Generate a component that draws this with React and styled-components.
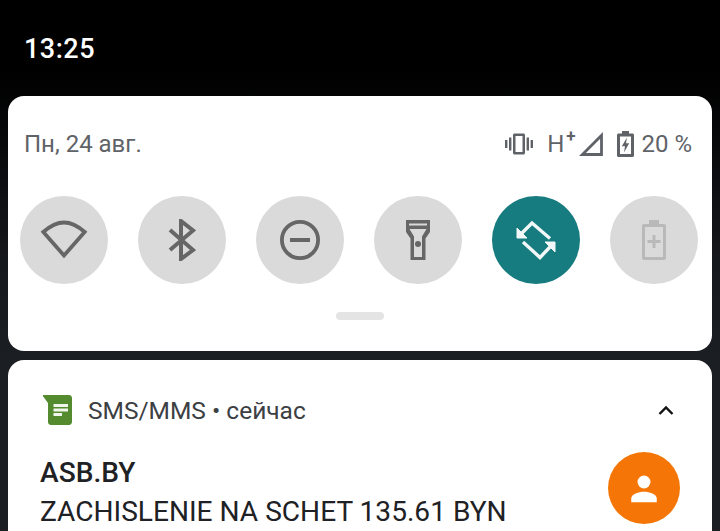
import React from 'react';
import styled, { createGlobalStyle } from 'styled-components';

const GlobalStyle = createGlobalStyle`
  html, body {
    margin: 0;
    padding: 0;
    height: 100%;
    background: #000;
    overflow: hidden;
  }
  #root {
    height: 100%;
  }
`;

const Screen = styled.div`
  width: 720px;
  height: 531px;
  overflow: hidden;
  background: linear-gradient(#000 70px, #15181c 260px, #1b1e22 360px);
  font-family: Roboto, 'Liberation Sans', sans-serif;
  padding: 0 8px;
  box-sizing: border-box;
`;

const StatusBar = styled.div`
  height: 96px;
  display: flex;
  align-items: center;
  padding: 1px 0 0 16px;
  box-sizing: border-box;
  color: #fff;
  font-size: 27px;
  font-weight: 500;
  letter-spacing: 0.5px;
`;

const QuickPanel = styled.section`
  height: 255px;
  background: #fff;
  border-radius: 16px;
  padding: 0 14px 0 12px;
  box-sizing: border-box;
  display: flex;
  flex-direction: column;
`;

const PanelHeader = styled.div`
  height: 100px;
  padding: 0 6px 4px 4px;
  box-sizing: border-box;
  display: flex;
  align-items: center;
  justify-content: space-between;
  color: #5f6368;
  font-size: 24px;
`;

const StatusIcons = styled.div`
  display: flex;
  align-items: center;
`;

const NetworkLabel = styled.span`
  margin-left: 14px;
  position: relative;
  padding-right: 9px;
`;

const Plus = styled.span`
  position: absolute;
  right: -2px;
  top: -4px;
  font-size: 17px;
  font-weight: 700;
`;

const Percent = styled.span`
  margin-left: 7px;
`;

const Toggles = styled.div`
  display: flex;
  gap: 30px;
`;

const Toggle = styled.div`
  width: 88px;
  height: 88px;
  border-radius: 50%;
  background: ${(p) => (p.$active ? '#167c80' : '#dadada')};
  display: flex;
  align-items: center;
  justify-content: center;
`;

const Handle = styled.div`
  width: 48px;
  height: 8px;
  border-radius: 4px;
  background: #e4e4e4;
  margin: 28px auto 0 auto;
  position: relative;
  left: 1px;
`;

const NotificationCard = styled.section`
  margin-top: 9px;
  height: 220px;
  background: #fff;
  border-radius: 16px 16px 0 0;
  padding: 31px 32px 0 32px;
  box-sizing: border-box;
`;

const AppRow = styled.div`
  height: 38px;
  display: flex;
  align-items: center;
  color: #3c4043;
  font-size: 24.5px;
`;

const AppName = styled.span`
  margin-left: 15px;
`;

const Chevron = styled.svg`
  margin-left: auto;
  margin-right: 5px;
`;

const MessageRow = styled.div`
  margin-top: 23px;
  display: flex;
  justify-content: space-between;
  align-items: flex-start;
`;

const MessageText = styled.div`
  color: #202124;
  font-size: 28.1px;
  line-height: 39px;
  padding-top: 1px;
`;

const Sender = styled.div`
  font-weight: 500;
`;

const Avatar = styled.div`
  width: 72px;
  height: 72px;
  border-radius: 50%;
  background: #f57606;
  display: flex;
  align-items: center;
  justify-content: center;
`;

const StatusGlyph = styled.svg`
  display: block;
  flex: none;
  margin-left: ${(p) => p.$gap || 0}px;
`;

const AppGlyph = styled.svg`
  flex: none;
  margin-left: 3px;
`;

const VibrateIcon = () => (
  <StatusGlyph width="28" height="22" viewBox="0 0 28 22" fill="#5f6368">
    <rect x="0" y="7" width="2.400" height="8" />
    <rect x="4" y="4.500" width="2.400" height="13" />
    <path fillRule="evenodd" d="M8 2c0-.8.7-1.500 1.500-1.500h9c.8 0 1.500.7 1.500 1.500v18c0 .8-.7 1.500-1.500 1.500h-9C8.700 21.500 8 20.800 8 20zM10.500 3v16h7V3z" />
    <rect x="21.600" y="4.500" width="2.400" height="13" />
    <rect x="25.600" y="7" width="2.400" height="8" />
  </StatusGlyph>
);

const SignalIcon = () => (
  <StatusGlyph $gap={6} width="24" height="24" viewBox="0 0 24 24" fill="none" stroke="#5f6368" strokeWidth="2.800">
    <path d="M22.500 3.400V22.500H3.400z" />
  </StatusGlyph>
);

const BatteryIcon = () => (
  <StatusGlyph $gap={14} width="17" height="26" viewBox="0 0 17 26" fill="#5f6368">
    <path fillRule="evenodd" d="M5 0h7v2.500h3.500c.8 0 1.500.7 1.500 1.500v20.500c0 .8-.7 1.500-1.500 1.500h-14C.7 26 0 25.300 0 24.500V4c0-.8.7-1.500 1.500-1.500H5zM3 5.500v17.500h11V5.500z" />
    <path d="M10 6.500 4.800 15.200h3.200L7 21.500l5.200-9.200H9z" />
  </StatusGlyph>
);

const WifiIcon = () => (
  <svg width="48" height="40" viewBox="0 0 48 40" fill="none" stroke="#666" strokeWidth="3.800" strokeLinejoin="miter">
    <path d="M24 35.500 3.300 12C9 7 16 2.500 24 2.500s15 4.500 20.700 9.500z" />
  </svg>
);

const BluetoothIcon = () => (
  <svg width="28" height="42" viewBox="0 0 28 42" fill="none" stroke="#666" strokeWidth="4">
    <path d="M2 11 25 31 13 40V2l12 9.500L2 31" />
  </svg>
);

const DndIcon = () => (
  <svg width="42" height="42" viewBox="0 0 42 42" fill="none" stroke="#666" strokeWidth="3.800">
    <circle cx="21" cy="21" r="18.100" />
    <path d="M11 21h20" strokeWidth="4" />
  </svg>
);

const FlashlightIcon = () => (
  <svg width="26" height="42" viewBox="0 0 26 42" fill="#666">
    <path fillRule="evenodd" d="M1 1h24v12l-4.500 6.500V41h-15V19.500L1 13zM4 4.500v2h18v-2zM4.500 10 9 17.500V38h8V17.500l4.500-7.500z" />
    <circle cx="13" cy="25" r="3" />
  </svg>
);

const RotateIcon = () => (
  <svg width="40" height="40" viewBox="0 0 40 40" fill="none" stroke="#f2f7f7" strokeWidth="3.400">
    <path d="M6 13 16 3l18 15.500" />
    <path d="M7 22l17 15.500L34 27" />
    <path d="M1 8v10h10z" fill="#f2f7f7" strokeWidth="1" />
    <path d="M39 32V22H29z" fill="#f2f7f7" strokeWidth="1" />
  </svg>
);

const BatterySaverIcon = () => (
  <svg width="26" height="42" viewBox="0 0 26 42" fill="#b9b9b9">
    <path fillRule="evenodd" d="M8 1h10v4h5c1.200 0 2 .8 2 2v32c0 1.200-.8 2-2 2H3c-1.200 0-2-.8-2-2V7c0-1.200.8-2 2-2h5zM4 8v30h18V8z" />
    <path d="M11.500 16h3v5h5v3h-5v5h-3v-5h-5v-3h5z" />
  </svg>
);

const MessagesIcon = () => (
  <AppGlyph width="30" height="30" viewBox="0 0 30 30">
    <path d="M0 0H27c1.500 0 3 1.200 3 3v24c0 1.500-1.200 3-3 3H9c-1.500 0-3-1.200-3-3V8z" fill="#558b2f" transform="translate(-1 0)" />
    <path d="M10.500 9H25v3H10.500zM10.500 13.500H25v3H10.500zM10.500 18H19v3h-8.500z" fill="#f1f6ec" />
  </AppGlyph>
);

const PersonIcon = () => (
  <svg width="36" height="36" viewBox="0 0 24 24" fill="#fff">
    <circle cx="12" cy="8" r="4.300" />
    <path d="M3.500 21.500v-2.500C3.500 16 8.500 14.500 12 14.500s8.500 1.500 8.500 4.500v2.500z" />
  </svg>
);

export default function App() {
  return (
    <Screen>
      <GlobalStyle />
      <StatusBar>13:25</StatusBar>
      <QuickPanel>
        <PanelHeader>
          <span>Пн, 24 авг.</span>
          <StatusIcons>
            <VibrateIcon />
            <NetworkLabel>
              H<Plus>+</Plus>
            </NetworkLabel>
            <SignalIcon />
            <BatteryIcon />
            <Percent>20 %</Percent>
          </StatusIcons>
        </PanelHeader>
        <Toggles>
          <Toggle><WifiIcon /></Toggle>
          <Toggle><BluetoothIcon /></Toggle>
          <Toggle><DndIcon /></Toggle>
          <Toggle><FlashlightIcon /></Toggle>
          <Toggle $active><RotateIcon /></Toggle>
          <Toggle><BatterySaverIcon /></Toggle>
        </Toggles>
        <Handle />
      </QuickPanel>
      <NotificationCard>
        <AppRow>
          <MessagesIcon />
          <AppName>SMS/MMS • сейчас</AppName>
          <Chevron width="18" height="12" viewBox="0 0 18 12" fill="none" stroke="#111" strokeWidth="2.400">
            <path d="M2.500 10 9 3.500l6.500 6.500" />
          </Chevron>
        </AppRow>
        <MessageRow>
          <MessageText>
            <Sender>ASB.BY</Sender>
            ZACHISLENIE NA SCHET 135.61 BYN
          </MessageText>
          <Avatar><PersonIcon /></Avatar>
        </MessageRow>
      </NotificationCard>
    </Screen>
  );
}
